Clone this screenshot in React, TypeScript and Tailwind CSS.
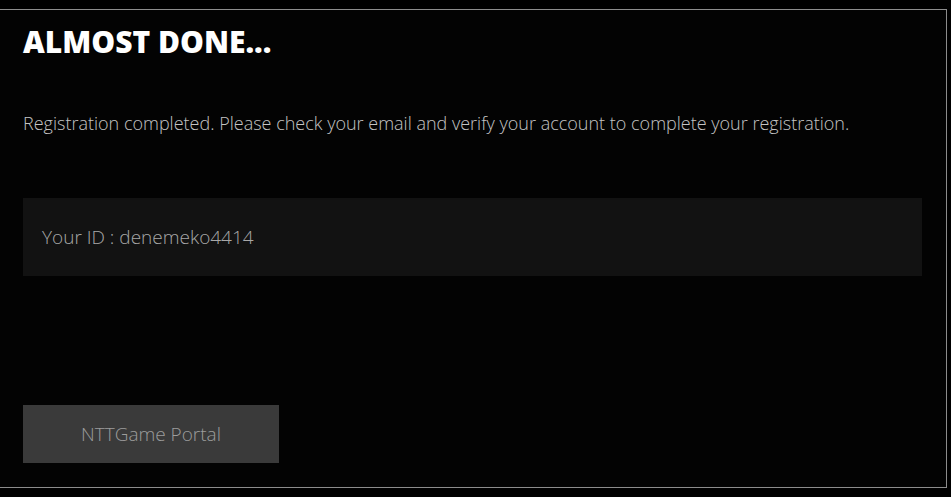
export default function App() {
  return (
    <div className="min-h-[497px] w-[951px] bg-black pt-[9px] font-['Open_Sans',sans-serif]">
      <div className="h-[479px] w-[947px] border-b border-r border-t border-[#8c8c8c] bg-[#030303] px-[23px]">
        <h1 className="pt-[14px] text-[30px] font-extrabold leading-[36px] text-white">
          ALMOST DONE...
        </h1>

        <p className="mt-[51px] text-[18px] font-light leading-[24px] text-[#c4c4c4]">
          Registration completed. Please check your email and verify your account to complete your registration.
        </p>

        <div className="mt-[63px] flex h-[78px] w-[899px] items-center bg-[#121212] px-[19px]">
          <span className="text-[19px] font-light text-[#a8a8a8]">Your ID : denemeko4414</span>
        </div>

        <button className="mt-[129px] flex h-[58px] w-[256px] items-center justify-center bg-[#3a3a3a] text-[19px] font-light text-[#9c9c9c]">
          NTTGame Portal
        </button>
      </div>
    </div>
  );
}
